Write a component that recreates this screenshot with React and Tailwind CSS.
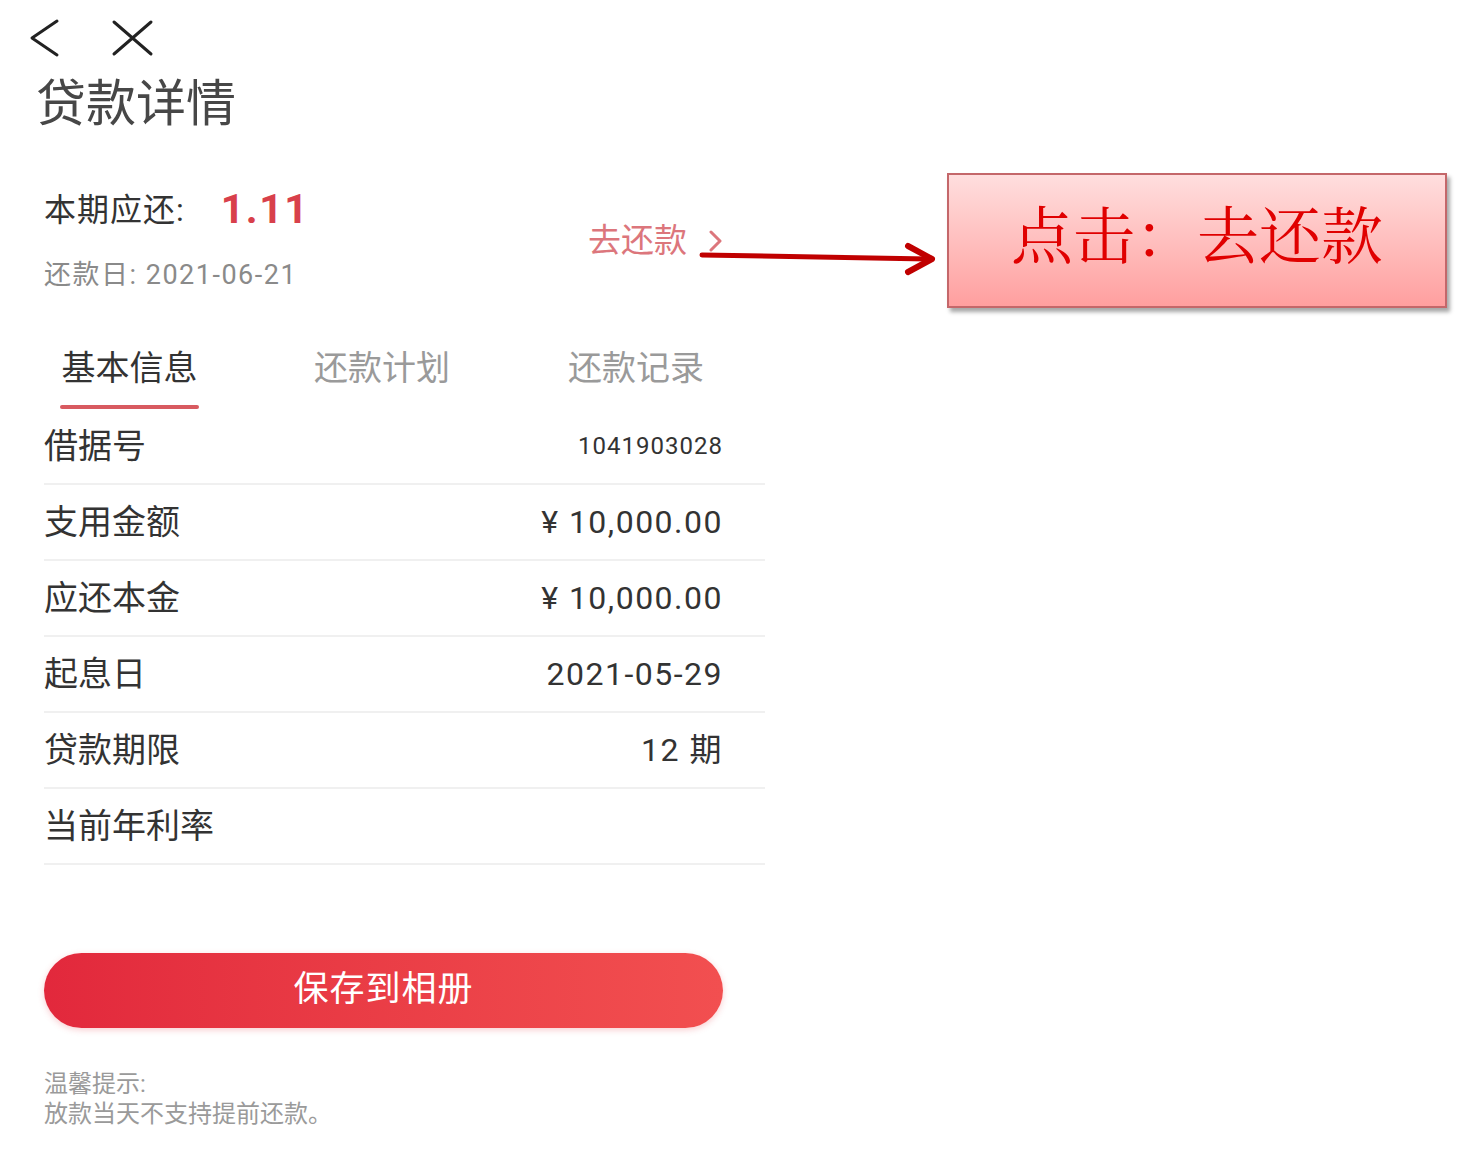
export default function App() {
  const rows = [
    { label: "借据号", value: "1041903028", small: true },
    { label: "支用金额", value: "¥ 10,000.00" },
    { label: "应还本金", value: "¥ 10,000.00" },
    { label: "起息日", value: "2021-05-29" },
    { label: "贷款期限", value: "12 期" },
    { label: "当前年利率", value: "" },
  ];
  return (
    <div
      className="relative w-[1463px] h-[1169px] bg-white text-[#333] overflow-hidden"
      style={{ fontFamily: "Roboto, 'Noto Sans CJK SC', sans-serif" }}
    >
      <div className="w-[765px] pl-[44px] flex flex-col">
        {/* nav */}
        <div className="h-[76px] -ml-[44px] flex items-center">
          <svg width="170" height="76" viewBox="0 0 170 76" fill="none" stroke="#222" strokeWidth="3" strokeLinecap="round" strokeLinejoin="round">
            <path d="M57 21 L32 38 L57 55" />
            <path d="M114 22 L151 54 M151 22 L114 54" />
          </svg>
        </div>
        {/* title */}
        <div className="-ml-[8px] h-[56px] text-[50px] leading-[56px] text-[#474747]">贷款详情</div>

        {/* summary */}
        <div className="mt-[48px] flex justify-between items-center pr-[42px]">
          <div className="flex flex-col">
            <div className="h-[60px] flex items-center">
              <span className="text-[32px] text-[#333] tracking-[1px]">本期应还:</span>
              <span className="ml-[36px] text-[41px] font-bold text-[#d8404b] tracking-[1.5px]">1.11</span>
            </div>
            <div className="mt-[20px] h-[30px] leading-[30px] text-[27px] text-[#8a8a8a] tracking-[1.5px]">
              还款日: 2021-06-21
            </div>
          </div>
          <div className="mt-[12px] flex items-center text-[33px] text-[#dc767c]">
            <span>去还款</span>
            <svg className="ml-[22px]" width="14" height="24" viewBox="0 0 14 24" fill="none" stroke="#dc767c" strokeWidth="3" strokeLinecap="round" strokeLinejoin="round">
              <path d="M2 3 L11 12 L2 21" />
            </svg>
          </div>
        </div>

        {/* tabs */}
        <div className="mt-[58px] flex pl-[16px] gap-[115px]">
          <div className="flex flex-col items-center w-[139px]">
            <div className="h-[40px] leading-[40px] text-[34px] text-[#333]">基本信息</div>
            <div className="mt-[17px] h-[4px] w-[139px] bg-[#d85a60] rounded-full"></div>
          </div>
          <div className="h-[40px] leading-[40px] text-[34px] text-[#9a9a9a] w-[139px]">还款计划</div>
          <div className="h-[40px] leading-[40px] text-[34px] text-[#9a9a9a] w-[139px]">还款记录</div>
        </div>

        {/* rows */}
        <div className="flex flex-col">
          {rows.map((r) => (
            <div key={r.label} className="h-[76px] border-b-2 border-[#f0f0f0] flex items-center justify-between pr-[42px]">
              <span className="text-[34px] text-[#333]">{r.label}</span>
              <span className={r.small ? "text-[24px] text-[#333] tracking-[1px]" : "text-[32px] text-[#333] tracking-[1.5px]"}>
                {r.value}
              </span>
            </div>
          ))}
        </div>

        {/* button */}
        <div className="mt-[88px] w-[679px] h-[75px] rounded-full bg-gradient-to-r from-[#e2283c] to-[#f24f50] flex items-center justify-center shadow-[0_2px_6px_rgba(230,60,70,0.25)]">
          <span className="text-[35px] text-white tracking-[1px]">保存到相册</span>
        </div>

        {/* hint */}
        <div className="mt-[41px] flex flex-col text-[24px] leading-[30px] text-[#9a9a9a]">
          <span>温馨提示:</span>
          <span>放款当天不支持提前还款。</span>
        </div>
      </div>

      {/* annotation arrow */}
      <svg className="absolute left-[696px] top-[238px]" width="250" height="40" viewBox="0 0 250 40" fill="none">
        <path d="M6 17 L232 21" stroke="#c00000" strokeWidth="5" strokeLinecap="round" />
        <path d="M212 8 L236 21 L212 34" stroke="#c00000" strokeWidth="6" strokeLinecap="round" strokeLinejoin="round" />
      </svg>

      {/* annotation box */}
      <div className="absolute left-[947px] top-[173px] w-[500px] h-[135px] border-2 border-[#c4676a] bg-gradient-to-b from-[#ffdede] to-[#ff9f9f] shadow-[3px_4px_4px_rgba(0,0,0,0.35)] flex items-center justify-center pb-[16px]">
        <span
          className="text-[62px] text-[#e00000]"
          style={{ fontFamily: "'Noto Serif CJK SC', 'Noto Sans CJK SC', serif" }}
        >
          点击：去还款
        </span>
      </div>
    </div>
  );
}
